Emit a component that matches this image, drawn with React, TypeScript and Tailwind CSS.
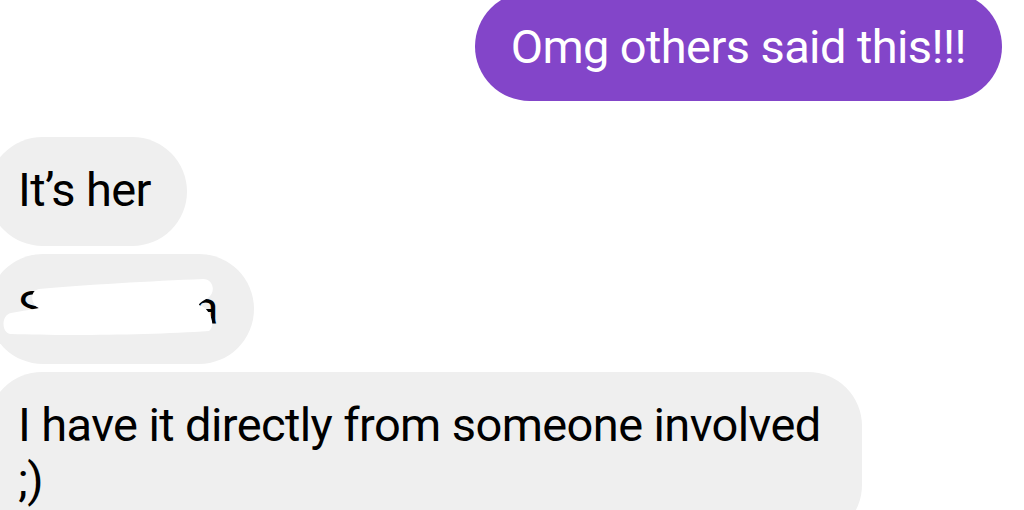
export default function App() {
  return (
    <div
      className="w-[1024px] h-[510px] overflow-hidden bg-white flex flex-col text-[47px] leading-[55px] tracking-[-0.6px]"
      style={{ fontFamily: "Roboto, 'Liberation Sans', sans-serif" }}
    >
      {/* outgoing */}
      <div className="shrink-0 flex justify-end pr-[22px] -mt-[8px]">
        <div className="h-[109px] px-9 rounded-full bg-[#8345c9] text-white flex items-center">
          Omg others said this!!!
        </div>
      </div>

      {/* incoming */}
      <div className="shrink-0 mt-[36px] self-start -ml-[12px] h-[109px] pl-[30px] pr-9 rounded-full bg-[#efefef] text-black flex items-center">
        <span className="-mt-1">It’s her</span>
      </div>

      <div className="shrink-0 mt-2 self-start -ml-[12px] h-[110px] pl-[30px] pr-9 rounded-full bg-[#efefef] text-black flex items-center relative">
        <span className="flex w-[200px] justify-between -mt-1">
          <span>S</span>
          <span>a</span>
        </span>
        <svg className="absolute left-[15px] top-[25px]" width="214" height="56" viewBox="0 0 214 56">
          <path
            d="M36 10 C80 6 150 2 200 0 C210 0 213 12 206 18 C200 22 196 24 196 26 C206 28 214 46 206 52 C150 56 60 57 8 55 C-2 54 -2 36 8 34 C20 32 30 30 36 29 C28 26 26 12 36 10 Z"
            fill="#ffffff"
          />
        </svg>
      </div>

      <div className="shrink-0 mt-2 self-start -ml-[12px] w-[874px] pt-[25px] pb-8 pl-[30px] pr-9 rounded-[54px] bg-[#efefef] text-black whitespace-nowrap">
        I have it directly from someone involved
        <br />
        ;)
      </div>
    </div>
  )
}
